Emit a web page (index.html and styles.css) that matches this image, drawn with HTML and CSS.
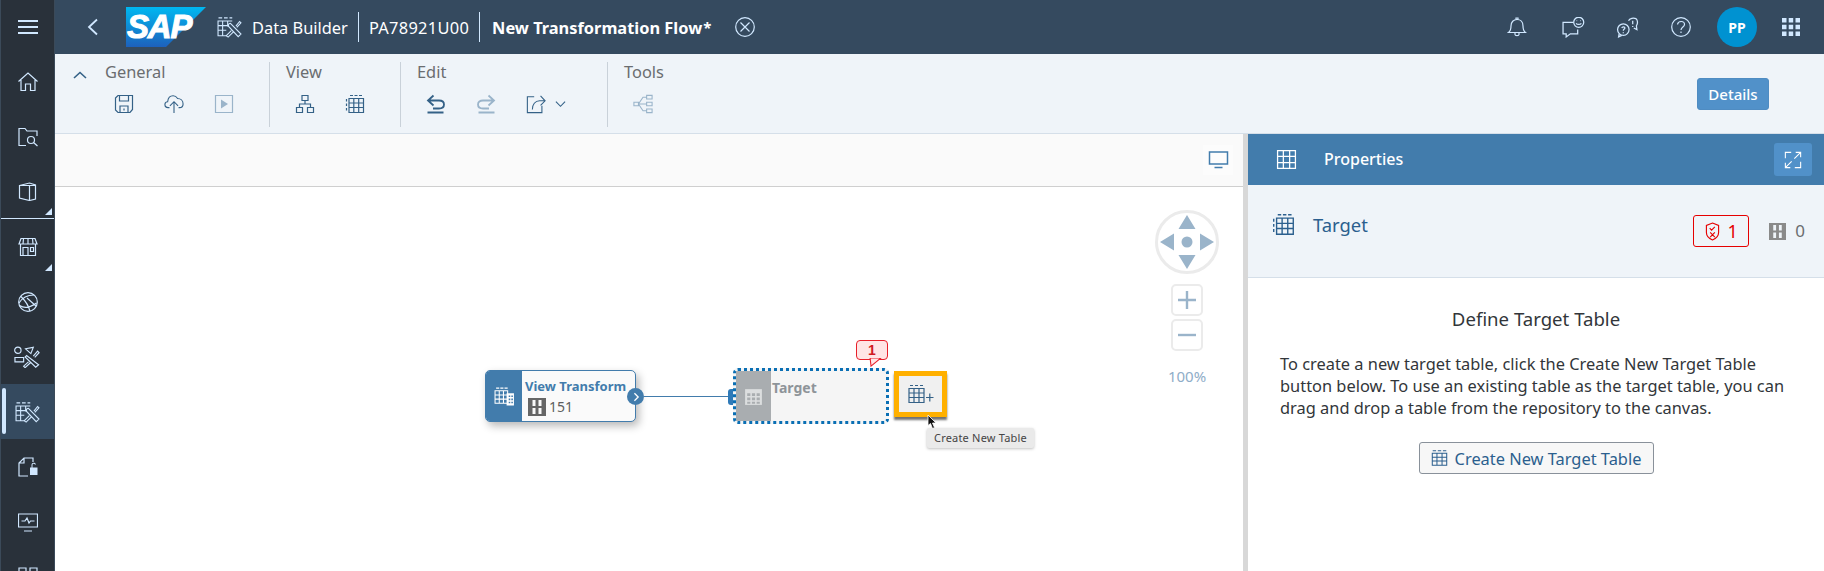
FILE: index.html
```html
<!DOCTYPE html>
<html lang="en">
<head>
    <meta charset="UTF-8">
    <meta name="viewport" content="width=device-width, initial-scale=1.0">
    <title>New Transformation Flow</title>
    <link rel="stylesheet" href="styles.css">
</head>
<body>
    <svg class="defs" width="0" height="0">
        <symbol id="grid" viewBox="0 0 20 20"><path d="M1.500 4.500h17v14h-17zM1.500 9h17M1.500 13.500h17M7 4.500v14M13 4.500v14"/><path d="M2 1.500h4M8 1.500h4M14 1.500h4"/></symbol>
        <symbol id="grid-dash" viewBox="0 0 20 20"><path d="M4 4.500h14.500v14H4zM4 9h14.500M4 13.500h14.500M8.800 4.500v14M13.700 4.500v14"/><path d="M5 1.500h3M9.500 1.500h3M14 1.500h3M1.500 5v2.500M1.500 9.500V12M1.500 14v2.500" /></symbol>
        <symbol id="grid-plain" viewBox="0 0 20 20"><path d="M1.500 1.500h17v17h-17zM1.500 7h17M1.500 13h17M7 1.500v17M13 1.500v17"/></symbol>
        <symbol id="tools" viewBox="0 0 28 24"><path d="M11 21.500H1.500v-16H17M1.500 10.500h12M1.500 15.500h9M6.500 5.500v16M12 5.500v6"/><path d="M2 2h4M8 2h4M14 2h3"/><path d="M13.500 8.500l-1.500 1.800 11.500 12.200 3-2.800L15 8zM16 16l-5.500 5.500 2 1.500 5.500-5.500M21 11l4-5 1.500 1.500-4.500 5"/></symbol>
        <symbol id="save" viewBox="0 0 20 20"><path d="M1.500 4l2.500-2.500h14.500v14l-2.500 3H4l-2.500-2.500zM5.500 1.500v5.500h9V1.500M6 18.500v-6.500h8v6.500M10 14.500v2"/></symbol>
        <symbol id="upload" viewBox="0 0 22 22"><path d="M6 15H4.500C2.500 15 1 13.500 1 11.500c0-2 1.500-3 3-3C4.500 4.500 7 2 10 2c2.500 0 4 1.500 5 3 3 0 6 2 6 6 0 2.500-2 4-4 4h-1"/><path d="M11 21V9M6.500 13L11 8.500l4.500 4.500"/></symbol>
        <symbol id="play" viewBox="0 0 20 20"><path d="M1.500 1.500h17v17h-17z"/><path class="solid" d="M7 5.500l7 4.500-7 4.500z"/></symbol>
        <symbol id="hierarchy" viewBox="0 0 20 20"><path d="M7 1.500h6v5H7zM1.500 13.500h6v5h-6zM12.500 13.500h6v5h-6zM10 6.500v3.500M4.500 13.500V10h11v3.500"/></symbol>
        <symbol id="undo" viewBox="0 0 20 20"><path d="M7.500 1.500L2 6.500l5.500 5M2.500 6.500H13c3 0 5 1.500 5 4s-2 4-5 4H7M1.500 18.500h16"/></symbol>
        <symbol id="redo" viewBox="0 0 20 20"><path d="M12.500 1.500l5.500 5-5.500 5M17.500 6.500H7c-3 0-5 1.500-5 4s2 4 5 4h6M2.500 18.500h16"/></symbol>
        <symbol id="share" viewBox="0 0 22 22"><path d="M9 3H1.500v17.500h16V13"/><path d="M7 17c0-5.500 3-9.500 8-9.500h5M16 2l5 5.500-5 5"/></symbol>
        <symbol id="tree" viewBox="0 0 22 22"><path d="M1 9h5v4H1zM15 1.500h6v4h-6zM15 9h6v4h-6zM15 16.500h6v4h-6zM6 11h9M6 11l5-7.500h4M6 11l5 7.500h4"/></symbol>
        <symbol id="film" viewBox="0 0 18 18"><path class="solid" fill-rule="evenodd" d="M0 0h18v18H0zM4.500 2v6h3V2zM10.500 2v6h3V2zM4.500 10v6h3v-6zM10.500 10v6h3v-6z"/></symbol>
        <symbol id="expand" viewBox="0 0 20 20"><path d="M8 1.500H1.500V8M12 18.500h6.500V12M18.500 7V1.500H13M18.500 1.500L11.500 8.500M1.500 13v5.500H7M1.500 18.500L8.500 11.500"/></symbol>
    </svg>

    <div class="app">
        <nav class="side">
            <div class="side-item">
                <svg class="side-burger" viewBox="0 0 20 16"><path d="M0 2h20M0 8h20M0 14h20"/></svg>
            </div>
            <div class="side-item">
                <svg class="ico20" viewBox="0 0 20 20"><path d="M0.500 9.500L10 1l9.500 8.500M3 8v10.500h4.500V12h5v6.500H17V8"/></svg>
            </div>
            <div class="side-item">
                <svg class="ico20" viewBox="0 0 20 20"><path d="M8 18.500H1V1.500h6l2 2.500h10v5"/><circle cx="13" cy="13" r="3.500"/><path d="M15.500 15.500l4 3.500"/></svg>
            </div>
            <div class="side-item side-more side-last">
                <svg class="ico20" viewBox="0 0 20 20"><path d="M1.500 4.500l10-2.500 6 2v14l-6 1.500-10-2.500zM1.500 4.500h16M11.500 4.500v15"/></svg>
            </div>
            <div class="side-item side-more">
                <svg class="ico20" viewBox="0 0 20 20"><path d="M3 1.500h14l2 5.500H1zM5.500 1.500L5 7M10 1.500V7M14.500 1.500L15 7M2.500 7v11.500h15V7M5 10.500h5v8H5zM12.500 10.500h3v4h-3z"/></svg>
            </div>
            <div class="side-item">
                <svg class="ico20" viewBox="0 0 20 20"><circle cx="10" cy="10" r="9.300"/><path d="M1 11c3-5 9-8 15-8M3 4.500c4 4 8 10 9 15M1.500 13.500c5 3 11 2 17-2.500M9 6l9 8"/></svg>
            </div>
            <div class="side-item">
                <svg class="ico26" viewBox="0 0 28 22"><circle cx="4" cy="4" r="3.300"/><path d="M1 11.500h9v4.500H1zM12 2.500L20 1l-2.500 6.500z"/><path d="M13 9.500l-1.500 1.500 11 10.500 3-2.500zM15 16l-5 4.500 1.500 1.500 5.500-5M20 10l4.500-5 1.500 1.500-4.500 5"/></svg>
            </div>
            <div class="side-item side-active">
                <span class="side-mark"></span>
                <svg class="ico26"><use href="#tools"/></svg>
            </div>
            <div class="side-item">
                <svg class="ico20" viewBox="0 0 20 20"><path d="M10 19H1V6l5-5h9v4M1 6h5V1"/><path class="solid" d="M12 10.500h7.500V18H12zM13.500 10.500V8c0-3 4-3 4.500-.5h-1c-.5-1-2.500-1-2.500.5v2.500z"/></svg>
            </div>
            <div class="side-item">
                <svg class="ico20" viewBox="0 0 20 20"><path d="M0.500 2h19v13h-19zM6 19h8M3.500 9h3.500l2-3 2 5 1.500-2h4"/></svg>
            </div>
            <div class="side-item">
                <svg class="ico20" viewBox="0 0 20 20"><path d="M1 1h7v7H1zM12 1h7v7h-7zM1 12h7v7H1zM12 12h7v7h-7z"/></svg>
            </div>
        </nav>

        <div class="main">
            <header class="shell">
                <svg class="shell-back" viewBox="0 0 12 18"><path d="M10 1.500L2 9l8 7.500"/></svg>
                <svg class="sap-logo" viewBox="0 0 80 40">
                    <defs>
                        <linearGradient id="sapfill" x1="0" y1="0" x2="0" y2="1">
                            <stop offset="0" stop-color="#00b8f1"/>
                            <stop offset="1" stop-color="#1d61bc"/>
                        </linearGradient>
                    </defs>
                    <path fill="url(#sapfill)" d="M0 0h80L40 40H0z"/>
                    <text x="1" y="31" class="sap-text">SAP</text>
                </svg>
                <svg class="ico26 shell-app"><use href="#tools"/></svg>
                <span class="shell-txt">Data Builder</span>
                <span class="shell-sep"></span>
                <span class="shell-txt shell-space">PA78921U00</span>
                <span class="shell-sep shell-sep-last"></span>
                <strong class="shell-txt">New Transformation Flow</strong><span class="shell-star">*</span>
                <svg class="shell-close" viewBox="0 0 20 20"><circle cx="10" cy="10" r="9.300"/><path d="M5.500 5.500l9 9M14.500 5.500l-9 9"/></svg>

                <div class="shell-right">
                    <svg class="ico20 bell" viewBox="0 0 20 20"><path d="M1.500 15.500c2-1.500 2.500-3 2.500-6.500 0-4 2.500-6.500 6-6.500s6 2.500 6 6.500c0 3.500.5 5 2.500 6.500zM9 2.500V1h2v1.500M8 15.500v2c0 1.500 4 1.500 4 0v-2"/></svg>
                    <svg class="ico-wide chat" viewBox="0 0 22 20"><path d="M11 5H1v11h3v3l4-3h7v-4"/><circle cx="16" cy="5" r="4.800"/><path d="M13.500 6c1 1.500 4 1.500 5 0M14 3.500h.5M17.500 3.500h.5"/></svg>
                    <svg class="ico-wide ask" viewBox="0 0 22 20"><path d="M12 3.500C13 1 17 .5 19 1.500c2 1.500 2 5 .5 7l.5 3.500-3-1.500"/><path d="M16 3.500v3.500M16 8.500v1"/><circle cx="7" cy="12" r="5.500"/><path d="M3 16l-.5 3 3-1.500M5.500 10.500c.5-1.500 3-1.500 3 0 0 1-1.500 1-1.500 2.500M7 14.500v1"/></svg>
                    <svg class="ico20 help" viewBox="0 0 20 20"><circle cx="10" cy="10" r="9.300"/><path d="M6.500 7.500c.5-4 7-4 7 0 0 2.500-3.500 2.500-3.500 5.500M10 14.500v1.500"/></svg>
                    <span class="avatar">PP</span>
                    <svg class="ico-apps" viewBox="0 0 18 18"><path class="solid" d="M0 0h4.500v4.500H0zM6.700 0h4.500v4.500H6.700zM13.500 0H18v4.500h-4.500zM0 6.700h4.500v4.500H0zM6.700 6.700h4.500v4.500H6.700zM13.500 6.700H18v4.500h-4.500zM0 13.500h4.500V18H0zM6.700 13.500h4.500V18H6.700zM13.500 13.500H18V18h-4.500z"/></svg>
                </div>
            </header>

            <section class="ribbon">
                <svg class="ribbon-fold" viewBox="0 0 14 8"><path d="M1 7l6-5.500L13 7"/></svg>
                <div class="rb-group rb-general">
                    <div class="rb-label">General</div>
                    <div class="rb-icons">
                        <svg class="rb-ico"><use href="#save"/></svg>
                        <svg class="rb-ico"><use href="#upload"/></svg>
                        <svg class="rb-ico off"><use href="#play"/></svg>
                    </div>
                </div>
                <div class="rb-group rb-view">
                    <div class="rb-label">View</div>
                    <div class="rb-icons">
                        <svg class="rb-ico"><use href="#hierarchy"/></svg>
                        <svg class="rb-ico"><use href="#grid-dash"/></svg>
                    </div>
                </div>
                <div class="rb-group rb-edit">
                    <div class="rb-label">Edit</div>
                    <div class="rb-icons">
                        <svg class="rb-ico strong"><use href="#undo"/></svg>
                        <svg class="rb-ico off strong"><use href="#redo"/></svg>
                        <svg class="rb-ico"><use href="#share"/></svg>
                        <svg class="rb-caret" viewBox="0 0 12 8"><path d="M1 1.500l5 5 5-5"/></svg>
                    </div>
                </div>
                <div class="rb-group rb-last">
                    <div class="rb-label">Tools</div>
                    <div class="rb-icons">
                        <svg class="rb-ico off"><use href="#tree"/></svg>
                    </div>
                </div>
                <button class="details-btn">Details</button>
            </section>

            <div class="work">
                <section class="canvas">
                    <div class="canvas-bar">
                        <span class="mode-btn">
                            <svg class="mode-ico" viewBox="0 0 20 18"><path d="M1 1h18v12H1z"/><path class="mode-foot" d="M6 16.500h8"/></svg>
                        </span>
                    </div>
                    <div class="board">
                        <div class="node node-view">
                            <div class="node-side">
                                <svg class="node-ico" viewBox="0 0 20 18"><path d="M1 3.500h12v12H1zM1 7.500h12M1 11.500h12M5 3.500v12M9 3.500v12M2 1h3M6 1h3M10 1h3"/><path class="solid" d="M12 6h7v11.500h-7z"/><path class="cut" d="M14 8h1.500v1.500H14zM16.500 8H18v1.500h-1.500zM14 11h1.500v1.500H14zM16.500 11H18v1.500h-1.500zM14 14h1.500v1.500H14zM16.500 14H18v1.500h-1.500z"/></svg>
                            </div>
                            <div class="node-body">
                                <div class="node-name">View Transform</div>
                                <div class="node-count">
                                    <svg class="film-ico"><use href="#film"/></svg>151
                                </div>
                            </div>
                        </div>
                        <span class="port-out">
                            <svg viewBox="0 0 8 12"><path d="M1.500 1.500L6 6l-4.500 4.500"/></svg>
                        </span>
                        <span class="link"></span>
                        <span class="port-in"></span>

                        <div class="node node-target">
                            <div class="node-side">
                                <svg class="node-ico" viewBox="0 0 20 18"><path class="solid" d="M2 2h16v15H2z"/><path class="cut" d="M4 6h3v2.500H4zM8.500 6h3v2.500h-3zM13 6h3v2.500h-3zM4 10h3v2.500H4zM8.500 10h3v2.500h-3zM13 10h3v2.500h-3zM4 14h3v2H4zM8.500 14h3v2h-3zM13 14h3v2h-3z"/></svg>
                            </div>
                            <div class="node-body">
                                <div class="node-name">Target</div>
                            </div>
                        </div>

                        <div class="err-bubble">1
                            <svg class="err-tail" viewBox="0 0 14 10"><path d="M1 0h12L2 9z"/></svg>
                        </div>

                        <div class="new-table">
                            <svg class="new-ico" viewBox="0 0 26 20"><path d="M1 4.500h15v14H1zM1 9h15M1 13.500h15M6 4.500v14M11 4.500v14M2 1.500h3M7 1.500h3M12 1.500h3M18 13.500h7.500M21.800 9.500v8"/></svg>
                        </div>
                        <svg class="cursor" viewBox="0 0 10 14"><path d="M1 0v10.500l2.500-2 2 5 2-1-2-4.500H9z"/></svg>
                        <div class="tip">Create New Table</div>

                        <div class="pad">
                            <svg class="pad-dial" viewBox="0 0 64 64">
                                <circle class="dial-ring" cx="32" cy="32" r="30.500"/>
                                <path d="M32 5l8.500 14h-17zM32 59l-8.500-14h17zM5 32l14-8.500v17zM59 32l-14 8.500v-17z"/>
                                <circle cx="32" cy="32" r="5.500"/>
                            </svg>
                            <span class="pad-btn">
                                <svg viewBox="0 0 18 18"><path d="M0 9h18M9 0v18"/></svg>
                            </span>
                            <span class="pad-btn">
                                <svg viewBox="0 0 18 18"><path d="M0 9h18"/></svg>
                            </span>
                            <span class="pad-zoom">100%</span>
                        </div>
                    </div>
                </section>

                <aside class="panel">
                    <div class="panel-bar">
                        <svg class="panel-bar-ico"><use href="#grid-plain"/></svg>
                        <span class="panel-bar-txt">Properties</span>
                        <span class="expand-btn"><svg class="expand-ico"><use href="#expand"/></svg></span>
                    </div>
                    <div class="panel-head">
                        <svg class="panel-head-ico"><use href="#grid-dash"/></svg>
                        <span class="panel-title">Target</span>
                        <span class="err-chip">
                            <svg class="shield" viewBox="0 0 16 20"><path d="M8 1l6.500 2.500V11c0 4-3 6.500-6.500 8-3.500-1.500-6.500-4-6.500-8V3.500zM5 6.500l2 2 3.500-3.500M5.500 11l5 5M10.500 11l-5 5"/></svg>
                            1
                        </span>
                        <span class="col-count">
                            <svg class="film-ico"><use href="#film"/></svg>0
                        </span>
                    </div>
                    <div class="panel-body">
                        <h2 class="define">Define Target Table</h2>
                        <p class="define-txt">To create a new target table, click the Create New Target Table button below. To use an existing table as the target table, you can drag and drop a table from the repository to the canvas.</p>
                        <button class="create-btn">
                            <svg class="create-ico"><use href="#grid"/></svg>
                            Create New Target Table
                        </button>
                    </div>
                </aside>
            </div>
        </div>
    </div>
</body>
</html>
```

FILE: styles.css
```css
* {
    box-sizing: border-box;
}

html, body {
    margin: 0;
    height: 100%;
    overflow: hidden;
}

body {
    font-family: "Noto Sans", "Open Sans", sans-serif;
    font-size: 16px;
    background: #fff;
}

.defs {
    position: absolute;
}

svg {
    fill: none;
    stroke: currentColor;
    stroke-width: 1.2;
    display: block;
}

svg .solid {
    fill: currentColor;
    stroke: none;
}

.app {
    display: flex;
    height: 571px;
}

/* left nav */
.side {
    width: 55px;
    flex: none;
    background: #29313a;
    border-left: 1px solid #3b4a59;
    border-right: 1px solid #3b4a59;
    color: #d1e8ff;
    overflow: hidden;
}

.side-item {
    position: relative;
    height: 55px;
    display: flex;
    align-items: center;
    justify-content: center;
}

.side-item:first-child {
    height: 54px;
}

.side-last {
    border-bottom: 1px solid #d1e8ff;
}

.side-more::after {
    content: "";
    position: absolute;
    right: 2px;
    bottom: 3px;
    border-left: 7px solid transparent;
    border-bottom: 7px solid #d1e8ff;
}

.side-active {
    background: #354a5f;
}

.side-mark {
    position: absolute;
    left: 1px;
    top: 4px;
    bottom: 5px;
    width: 4px;
    border-radius: 2px;
    background: #d1e8ff;
}

.side-burger {
    width: 20px;
    height: 16px;
    stroke-width: 2;
}

.ico20 {
    width: 20px;
    height: 20px;
}

.ico26 {
    width: 27px;
    height: 22px;
}

.ico-wide {
    width: 23px;
    height: 21px;
}

/* shell header */
.main {
    flex: 1;
    min-width: 0;
    display: flex;
    flex-direction: column;
}

.shell {
    height: 54px;
    flex: none;
    background: #354a5f;
    color: #fff;
    display: flex;
    align-items: center;
    padding-left: 32px;
}

.shell-back {
    width: 12px;
    height: 18px;
    color: #d1e8ff;
    stroke-width: 1.8;
    margin-right: 27px;
}

.sap-logo {
    width: 80px;
    height: 40px;
    stroke: none;
    margin-right: 10px;
}

.sap-text {
    font-family: "Liberation Sans", sans-serif;
    font-weight: 700;
    font-style: italic;
    font-size: 33px;
    letter-spacing: -1.2px;
    fill: #fff;
    stroke: #fff;
    stroke-width: 1;
}

.shell-app {
    color: #d1e8ff;
    margin-right: 9px;
}

.shell-txt {
    font-size: 16.4px;
    font-weight: 400;
    white-space: nowrap;
}

.shell-space {
    letter-spacing: 0.3px;
}

strong.shell-txt {
    font-weight: 700;
}

.shell-sep {
    width: 1px;
    height: 30px;
    background: #d1e8ff;
    margin: 0 10px;
}

.shell-sep-last {
    margin-right: 12px;
}

.shell-star {
    font-size: 15px;
    font-weight: 700;
    margin-left: 1px;
}

.shell-close {
    width: 20px;
    height: 20px;
    color: #d1e8ff;
    margin-left: 24px;
}

.shell-right {
    margin-left: auto;
    display: flex;
    align-items: center;
    color: #d1e8ff;
    padding-right: 24px;
}

.chat {
    margin-left: 35px;
}

.ask {
    margin-left: 31px;
}

.help {
    margin-left: 32px;
}

.avatar {
    width: 40px;
    height: 40px;
    border-radius: 50%;
    background: #0092d1;
    color: #fff;
    font-size: 14px;
    font-weight: 700;
    display: flex;
    align-items: center;
    justify-content: center;
    margin-left: 26px;
}

.ico-apps {
    width: 18px;
    height: 18px;
    margin-left: 25px;
    color: #d1e8ff;
}

/* ribbon */
.ribbon {
    height: 80px;
    flex: none;
    background: #eff4f9;
    border-bottom: 1px solid #d5dfe9;
    display: flex;
    padding: 8px 0 0 0;
    position: relative;
}

.ribbon-fold {
    width: 14px;
    height: 8px;
    color: #346187;
    stroke-width: 1.6;
    margin: 9px 0 0 18px;
    flex: none;
}

.rb-group {
    height: 65px;
    padding: 0 0 0 16px;
    border-right: 1px solid #c9d1d9;
    flex: none;
}

.rb-general {
    padding-left: 18px;
    width: 183px;
}

.rb-view {
    width: 131px;
}

.rb-edit {
    width: 207px;
}

.rb-last {
    border-right: 0;
}

.rb-label {
    color: #6a6d70;
    font-size: 16.4px;
    line-height: 20px;
}

.rb-icons {
    display: flex;
    align-items: center;
    gap: 30px;
    height: 22px;
    margin: 11px 0 0 9px;
    color: #346187;
}

.rb-ico {
    width: 20px;
    height: 20px;
    flex: none;
}

.rb-ico.off {
    color: #9ab4ca;
}

.rb-ico.strong {
    stroke-width: 1.8;
}

.rb-caret {
    width: 11px;
    height: 8px;
    margin-left: -21px;
}

.details-btn {
    position: absolute;
    right: 55px;
    top: 24px;
    width: 72px;
    height: 32px;
    background: #5191c9;
    border: 1px solid #4f8cc2;
    border-radius: 3px;
    color: #fff;
    font: 500 15px "Noto Sans", sans-serif;
    padding: 0;
}

/* work area */
.work {
    flex: 1;
    display: flex;
    min-height: 0;
}

.canvas {
    flex: 1;
    min-width: 0;
    display: flex;
    flex-direction: column;
    border-right: 5px solid #d8d8d8;
}

.canvas-bar {
    height: 53px;
    flex: none;
    background: #fafafa;
    border-bottom: 1px solid #cfcfcf;
    display: flex;
    align-items: center;
    justify-content: flex-end;
    padding-right: 10px;
}

.mode-btn {
    width: 30px;
    height: 30px;
    background: #fcfcfc;
    display: flex;
    align-items: center;
    justify-content: center;
}

.mode-ico {
    width: 21px;
    height: 18px;
    color: #427cac;
    stroke-width: 1.5;
}

.board {
    flex: 1;
    position: relative;
    background: #fff;
}

/* nodes sit on a free canvas, coordinates are relative to .board */
.node {
    position: absolute;
    display: flex;
    height: 52px;
    border-radius: 5px;
    overflow: hidden;
}

.node-view {
    left: 430px;
    top: 183px;
    width: 151px;
    border: 1px solid #427cac;
    background: #fafafa;
    box-shadow: 3px 4px 8px rgba(0, 0, 0, 0.28);
}

.node-side {
    width: 36px;
    flex: none;
    background: #427cac;
    display: flex;
    align-items: center;
    justify-content: center;
    color: #fff;
}

.node-ico {
    width: 21px;
    height: 19px;
    stroke-width: 1;
}

.node-ico .cut {
    fill: #427cac;
    stroke: none;
}

.node-body {
    padding: 5px 0 0 3px;
    min-width: 0;
}

.node-name {
    font-size: 13px;
    font-weight: 700;
    line-height: 20px;
    color: #427cac;
    white-space: nowrap;
}

.node-count {
    display: flex;
    align-items: center;
    gap: 3px;
    font-size: 14px;
    line-height: 18px;
    color: #5e5e5e;
    margin: 2px 0 0 3px;
}

.film-ico {
    width: 18px;
    height: 18px;
    color: #666;
}

.port-out {
    position: absolute;
    left: 572px;
    top: 201px;
    width: 17px;
    height: 17px;
    border-radius: 50%;
    background: #427cac;
    color: #fff;
    display: flex;
    align-items: center;
    justify-content: center;
    padding-left: 2px;
}

.port-out svg {
    width: 7px;
    height: 10px;
    stroke-width: 1.6;
}

.link {
    position: absolute;
    left: 589px;
    top: 209px;
    width: 88px;
    height: 1px;
    background: #427cac;
}

.port-in {
    position: absolute;
    left: 673px;
    top: 202px;
    width: 7px;
    height: 16px;
    border-radius: 3px 0 0 3px;
    background: #2f7ab8;
}

.node-target {
    left: 678px;
    top: 181px;
    width: 156px;
    height: 56px;
    border: 3px dotted #0a6fb4;
    background: #f5f5f5;
    overflow: visible;
}

.node-target .node-side {
    background: #a9adb0;
    color: #dcdedf;
    width: 35px;
}

.node-target .cut {
    fill: #a9adb0;
}

.node-target .node-body {
    padding: 7px 0 0 1px;
}

.node-target .node-name {
    color: #8e9499;
    font-size: 14px;
}

.err-bubble {
    position: absolute;
    left: 801px;
    top: 153px;
    width: 32px;
    height: 20px;
    border: 1px solid #e8202a;
    border-radius: 4px;
    background: #ffe5e5;
    color: #d01b22;
    font: 700 14px/18px "Liberation Sans", sans-serif;
    text-align: center;
}

.err-tail {
    position: absolute;
    left: 12px;
    top: 17px;
    width: 13px;
    height: 9px;
    color: #e8202a;
    fill: #ffe5e5;
}

.new-table {
    position: absolute;
    left: 839px;
    top: 184px;
    width: 53px;
    height: 46px;
    border: 5px solid #ffb000;
    background: #f0f0f0;
    box-shadow: 0 3px 2px rgba(0, 0, 0, 0.55);
    display: flex;
    align-items: center;
    justify-content: center;
    color: #346187;
}

.new-ico {
    width: 26px;
    height: 20px;
}

.cursor {
    position: absolute;
    left: 872px;
    top: 228px;
    width: 10px;
    height: 14px;
    fill: #111;
    stroke: #fff;
    stroke-width: 0.8;
}

.tip {
    position: absolute;
    left: 872px;
    top: 241px;
    height: 20px;
    padding: 0 7px;
    background: #eaeaea;
    border-radius: 2px;
    box-shadow: 0 1px 3px rgba(0, 0, 0, 0.25);
    font-size: 11px;
    line-height: 20px;
    letter-spacing: 0.2px;
    color: #444;
    white-space: nowrap;
}

.pad {
    position: absolute;
    left: 1100px;
    top: 23px;
    width: 64px;
    display: flex;
    flex-direction: column;
    align-items: center;
    color: #9ab4ca;
}

.pad-dial {
    width: 64px;
    height: 64px;
    stroke: none;
    margin-bottom: 10px;
}

.pad-dial path, .pad-dial circle {
    fill: #9ab4ca;
}

.pad-dial .dial-ring {
    fill: none;
    stroke: #ebebeb;
    stroke-width: 3;
}

.pad-btn {
    width: 32px;
    height: 32px;
    margin-bottom: 3px;
    border: 2px solid #ebebeb;
    border-radius: 5px;
    display: flex;
    align-items: center;
    justify-content: center;
}

.pad-btn svg {
    width: 18px;
    height: 18px;
    stroke-width: 2.4;
}

.pad-zoom {
    font-size: 15px;
    line-height: 18px;
    margin-top: 13px;
    color: #8fadc8;
}

/* properties panel */
.panel {
    width: 576px;
    flex: none;
    display: flex;
    flex-direction: column;
}

.panel-bar {
    height: 51px;
    flex: none;
    background: #427cac;
    color: #fff;
    display: flex;
    align-items: center;
    padding: 0 12px 0 28px;
}

.panel-bar-ico {
    width: 21px;
    height: 21px;
}

.panel-bar-txt {
    font-size: 16px;
    font-weight: 500;
    line-height: 20px;
    margin: -2px 0 0 27px;
}

.expand-btn {
    margin-left: auto;
    width: 38px;
    height: 33px;
    border-radius: 3px;
    background: #5191c9;
    display: flex;
    align-items: center;
    justify-content: center;
}

.expand-ico {
    width: 18px;
    height: 18px;
}

.panel-head {
    height: 93px;
    flex: none;
    background: #eff4f9;
    border-bottom: 1px solid #d5dfe9;
    display: flex;
    align-items: flex-start;
    padding: 28px 0 0 24px;
    color: #2b5f8e;
}

.panel-head-ico {
    width: 23px;
    height: 23px;
}

.panel-title {
    font-size: 18.4px;
    line-height: 22px;
    margin: 1px 0 0 18px;
}

.err-chip {
    margin-left: auto;
    margin-top: 2px;
    width: 56px;
    height: 32px;
    border: 1px solid #e60000;
    border-radius: 3px;
    color: #e60000;
    display: flex;
    align-items: center;
    justify-content: center;
    gap: 8px;
    font-size: 18px;
}

.shield {
    width: 15px;
    height: 19px;
}

.col-count {
    display: flex;
    align-items: center;
    gap: 9px;
    margin: 9px 19px 0 20px;
    font-size: 17px;
    line-height: 18px;
    color: #6a6d70;
}

.col-count .film-ico {
    width: 17px;
    height: 17px;
    color: #8a8a8a;
}

.panel-body {
    flex: 1;
    width: 512px;
    margin-left: 32px;
    display: flex;
    flex-direction: column;
    align-items: center;
    color: #32363a;
}

.define {
    margin: 28px 0 0;
    font-size: 18.6px;
    font-weight: 400;
    line-height: 26px;
}

.define-txt {
    margin: 21px 0 0;
    font-size: 16.4px;
    line-height: 22px;
}

.create-btn {
    margin-top: 23px;
    width: 235px;
    height: 32px;
    background: #f7f7f7;
    border: 1px solid #89919a;
    border-radius: 3px;
    color: #2b5f8e;
    font: 16.4px "Noto Sans", sans-serif;
    display: flex;
    align-items: center;
    justify-content: center;
    gap: 7px;
    padding: 0;
}

.create-ico {
    width: 17px;
    height: 18px;
}
```
